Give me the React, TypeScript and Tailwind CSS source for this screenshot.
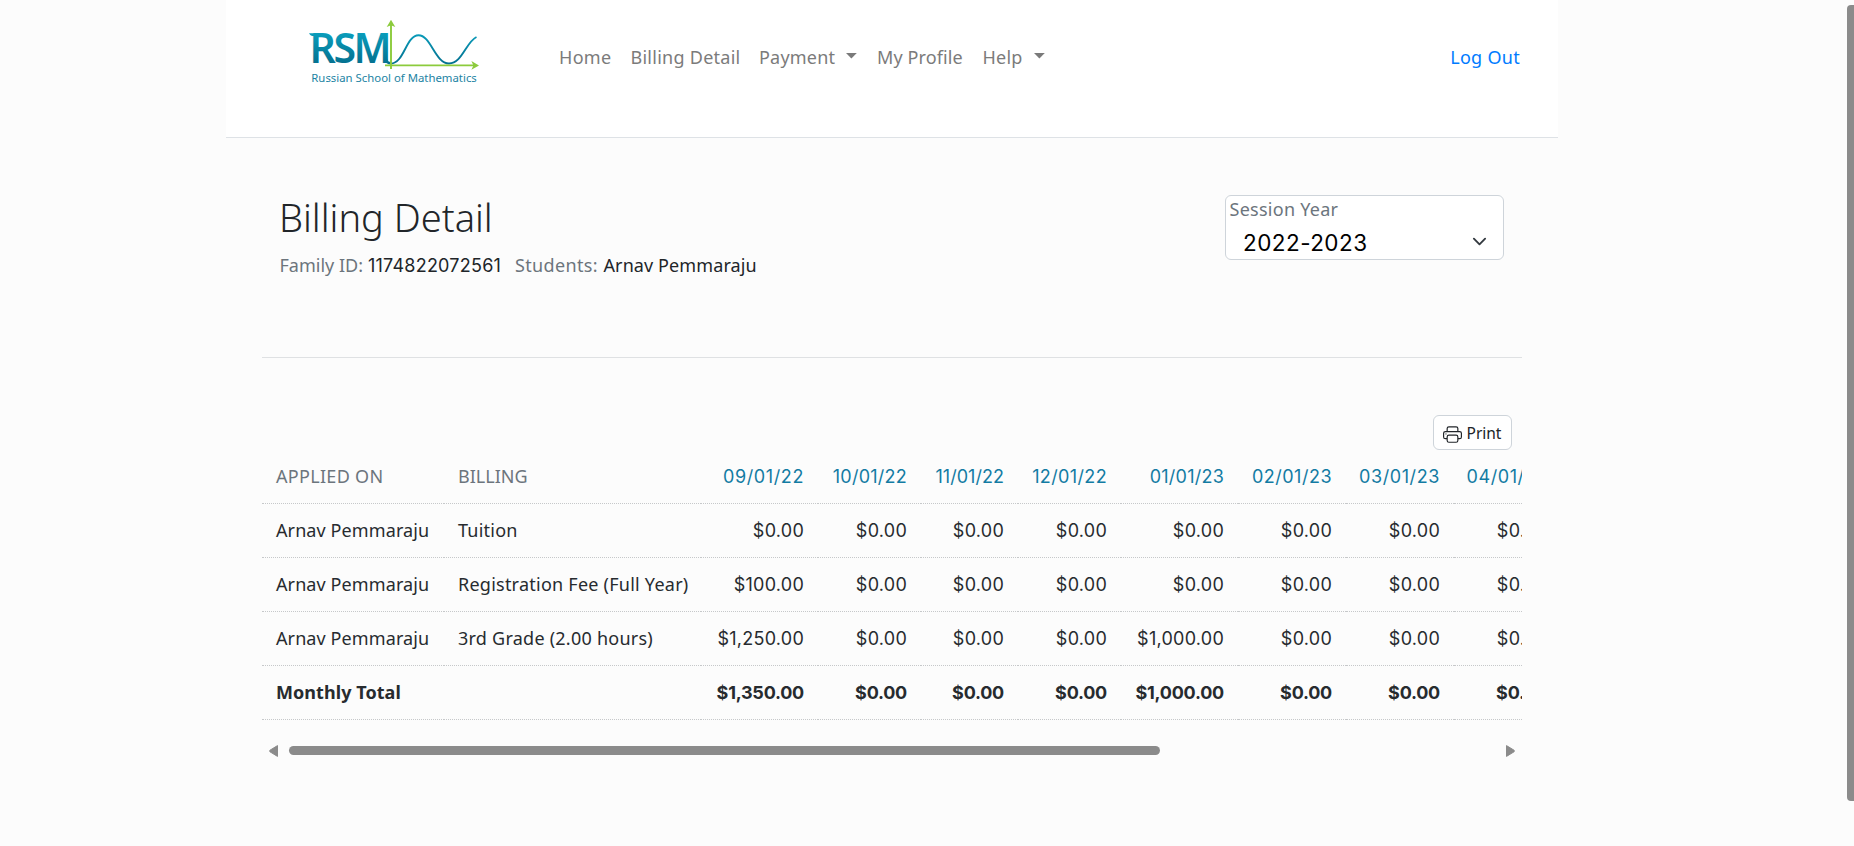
import React from "react";
import { BsPrinter } from "react-icons/bs";

const months = ["09/01/22", "10/01/22", "11/01/22", "12/01/22", "01/01/23", "02/01/23", "03/01/23", "04/01/23"];
const monthTracking = [
  "tracking-[0.62px]",
  "tracking-[0.24px]",
  "tracking-[0.03px]",
  "tracking-[0.37px]",
  "tracking-[0.24px]",
  "tracking-[0.5px]",
  "tracking-[0.6px]",
  "tracking-[0.6px]",
];

const rows = [
  { name: "Arnav Pemmaraju", item: "Tuition", amounts: ["$0.00", "$0.00", "$0.00", "$0.00", "$0.00", "$0.00", "$0.00", "$0.00"] },
  { name: "Arnav Pemmaraju", item: "Registration Fee (Full Year)", amounts: ["$100.00", "$0.00", "$0.00", "$0.00", "$0.00", "$0.00", "$0.00", "$0.00"] },
  { name: "Arnav Pemmaraju", item: "3rd Grade (2.00 hours)", amounts: ["$1,250.00", "$0.00", "$0.00", "$0.00", "$1,000.00", "$0.00", "$0.00", "$0.00"] },
];
const totals = ["$1,350.00", "$0.00", "$0.00", "$0.00", "$1,000.00", "$0.00", "$0.00", "$0.00"];

const cell = "h-[54px] border-b border-dotted border-[#c6c8ca] p-0 whitespace-nowrap";
const label = `${cell} pl-[14px] text-left`;
const money = `${cell} pr-[14px] text-right font-['Inter',sans-serif]`;

function Logo() {
  return (
    <svg width="180" height="74" viewBox="305 15 180 74" className="block">
      <defs>
        <linearGradient id="teal" x1="0" y1="33" x2="0" y2="64" gradientUnits="userSpaceOnUse">
          <stop offset="0" stopColor="#0a9dbb" />
          <stop offset="1" stopColor="#04708f" />
        </linearGradient>
      </defs>
      <text x="309.5 333.5 353.5" y="62.5" fontFamily="Noto Sans, sans-serif" fontWeight="600" fontSize="41" fill="url(#teal)">
        RSM
      </text>
      <path d="M309 33.300h8v2.800h-3.200c-2.200 0-3.800-.8-4.800-2.800z" fill="url(#teal)" />
      <path d="M386 59c.4 3 2 4.300 5 4.300" fill="none" stroke="url(#teal)" strokeWidth="2.400" />
      <path
        d="M391 63.500C404 63.500 406 35.300 418.500 35.300S435 63.500 449 63.500C462 63.500 466 42 476.500 37"
        fill="none"
        stroke="url(#teal)"
        strokeWidth="1.900"
      />
      <path d="M391 69V23M385 65.400H476" stroke="#8ccb3c" strokeWidth="1.900" fill="none" />
      <path d="M391 19.800l4.300 7.200-4.300-1.800-4.300 1.800zM479 65.400l-7.600 4.300 2-4.300-2-4.300z" fill="#8ccb3c" />
      <text x="311.300" y="81.500" fontFamily="Noto Sans, sans-serif" fontSize="11.400" textLength="165.500" lengthAdjust="spacingAndGlyphs" fill="#1c83a3">
        Russian School of Mathematics
      </text>
    </svg>
  );
}

function Caret() {
  return (
    <svg width="11" height="6" viewBox="0 0 11 6" className="mt-[9.500px] ml-[11px] shrink-0">
      <path d="M0 0h10.800L5.400 5.400z" fill="#7a7a7a" />
    </svg>
  );
}

function NavBar() {
  return (
    <header className="flex h-[138px] w-[1332px] items-start border-b border-[#dee2e6] bg-white">
      <div className="ml-[79px] w-[254px] shrink-0 pt-[15px]">
        <Logo />
      </div>
      <nav className="flex pt-[43.500px] leading-[27px] text-[#7b7b7b]">
        <a className="w-[71.500px] tracking-[0.31px]">Home</a>
        <a className="w-[128.500px] tracking-[0.26px]">Billing Detail</a>
        <a className="flex w-[118px] tracking-[0.2px]">Payment<Caret /></a>
        <a className="w-[105.500px] tracking-[0.11px]">My Profile</a>
        <a className="flex w-[64px] tracking-[0.2px]">Help<Caret /></a>
      </nav>
      <a className="mt-[43.500px] mr-[38px] ml-auto leading-[27px] tracking-[0.29px] text-[#007bff]">Log Out</a>
    </header>
  );
}

function PageHeading() {
  return (
    <section className="flex h-[220px] items-start justify-between border-b border-[#dfe1e3]">
      <div className="pt-[56px] pl-[17px]">
        <h1 className="text-[38px] leading-[46px] font-light">Billing Detail</h1>
        <p className="mt-[11.500px] flex pl-[0.500px] leading-[27px] whitespace-nowrap">
          <span className="w-[88.500px] text-[#6c757d]">Family ID:</span>
          <span className="w-[147px] font-['Inter',sans-serif] tracking-[0.230px]">1174822072561</span>
          <span className="w-[88.500px] tracking-[0.350px] text-[#6c757d]">Students:</span>
          <span className="tracking-[0.100px]">Arnav Pemmaraju</span>
        </p>
      </div>
      <div className="mt-[57px] mr-[18px] h-[65px] w-[279px] rounded-[6px] border border-[#ced4da] bg-white text-black">
        <div className="pl-[3.500px] leading-[26px] tracking-[0.270px] text-[#6c757d]">Session Year</div>
        <div className="flex items-center justify-between pt-[3px] pr-[16px] pl-[17px]">
          <span className="font-['Inter',sans-serif] text-[22.500px] leading-[35px] tracking-[0.450px]">2022-2023</span>
          <svg width="15" height="15" viewBox="0 0 16 16" fill="none" stroke="#343a40" strokeWidth="2" strokeLinecap="round" strokeLinejoin="round" className="-mt-[2px]">
            <path d="m2 5 6 6 6-6" />
          </svg>
        </div>
      </div>
    </section>
  );
}

function BillingTable() {
  return (
    <div className="overflow-hidden">
      <table className="w-[1300px] table-fixed border-separate border-spacing-0 leading-[27px] text-[#272b2f]">
        <colgroup>
          <col className="w-[182px]" />
          <col className="w-[257px]" />
          <col className="w-[117px]" />
          <col className="w-[103px]" />
          <col className="w-[97px]" />
          <col className="w-[103px]" />
          <col className="w-[117px]" />
          <col className="w-[108px]" />
          <col className="w-[108px]" />
          <col className="w-[108px]" />
        </colgroup>
        <thead>
          <tr>
            <th className={`${label} font-normal tracking-[0.310px] text-[#6c757d]`}>APPLIED ON</th>
            <th className={`${label} font-normal text-[#6c757d]`}>BILLING</th>
            {months.map((m, i) => (
              <th key={m} className={`${money} font-normal text-[#137ba3] ${monthTracking[i]}`}>{m}</th>
            ))}
          </tr>
        </thead>
        <tbody>
          {rows.map((r) => (
            <tr key={r.item}>
              <td className={`${label} tracking-[0.100px]`}>{r.name}</td>
              <td className={`${label} tracking-[0.240px]`}>{r.item}</td>
              {r.amounts.map((a, i) => (
                <td key={i} className={`${money} tracking-[0.250px]`}>{a}</td>
              ))}
            </tr>
          ))}
          <tr className="font-bold">
            <td className={`${label} tracking-[0.060px]`}>Monthly Total</td>
            <td className={label} />
            {totals.map((a, i) => (
              <td key={i} className={`${money} tracking-[-0.250px]`}>{a}</td>
            ))}
          </tr>
        </tbody>
      </table>
    </div>
  );
}

function HorizontalScroll() {
  return (
    <div className="mt-[24px] flex h-[13px] items-center pr-[7px] pl-[7px]">
      <svg width="10" height="12" viewBox="0 0 10 12">
        <path d="M8.500.6v10.800L1 6.800Q0 6 1 5.200z" fill="#8b8b8b" stroke="#8b8b8b" strokeLinejoin="round" />
      </svg>
      <div className="ml-[10px] h-[9px] w-[871px] rounded-full bg-[#8b8b8b]" />
      <svg width="10" height="12" viewBox="0 0 10 12" className="ml-auto">
        <path d="M1.500.6v10.800L9 6.800Q10 6 9 5.200z" fill="#8b8b8b" stroke="#8b8b8b" strokeLinejoin="round" />
      </svg>
    </div>
  );
}

export default function App() {
  return (
    <div className="flex h-[846px] w-full justify-between overflow-hidden bg-[#fcfcfc] font-['Noto_Sans',sans-serif] text-[18px] text-[#212529]">
      <div className="ml-[226px] w-[1332px]">
        <NavBar />
        <main className="px-[36px]">
          <PageHeading />
          <div className="flex justify-end pt-[57px] pr-[10px]">
            <button className="flex h-[35px] w-[79px] items-center rounded-[6px] border border-[#ced4da] bg-white pl-[9px] text-[15.500px] leading-[24px] whitespace-nowrap">
              <BsPrinter size={19} className="mt-[3px] mr-[4.500px] shrink-0" />
              Print
            </button>
          </div>
          <BillingTable />
          <HorizontalScroll />
        </main>
      </div>
      <div className="mt-[5px] h-[796px] w-[7px] rounded-l-[4px] bg-[#8b8b8b]" />
    </div>
  );
}
